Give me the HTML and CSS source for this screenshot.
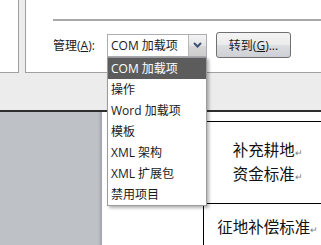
FILE: index.html
```html
<!DOCTYPE html>
<html lang="zh-CN">
  <head>
    <meta charset="UTF-8" />
    <title>加载项管理</title>
    <link rel="stylesheet" href="styles.css">
  </head>
  <body>
    <div class="window">
      <div class="panes">
        <div class="side-pane"></div>
        <div class="main-pane">
          <div class="separator"></div>
          <div class="manage-row">
            <span class="manage-label">管理(<u>A</u>):</span>
            <div class="combo">
              <span class="combo-value">COM 加载项</span>
              <span class="combo-arrow">
                <svg width="9" height="6" viewBox="0 0 9 6">
                  <polyline points="1,1 4.5,4.5 8,1" fill="none" stroke="#3d5175" stroke-width="2" />
                </svg>
              </span>
              <ul class="combo-list">
                <li class="selected">COM 加载项</li>
                <li>操作</li>
                <li>Word 加载项</li>
                <li>模板</li>
                <li>XML 架构</li>
                <li>XML 扩展包</li>
                <li>禁用项目</li>
              </ul>
            </div>
            <button class="go-btn">转到(<u>G</u>)...</button>
          </div>
        </div>
      </div>
    </div>

    <div class="workspace">
      <div class="gutter"></div>
      <div class="page">
        <table class="doc-table">
          <colgroup>
            <col class="col-blank" />
            <col class="col-text" />
          </colgroup>
          <tr class="row-tall">
            <td class="blank"></td>
            <td class="cell">补充耕地<span class="mark">↵</span><br />资金标准<span class="mark">↵</span></td>
          </tr>
          <tr>
            <td class="blank"></td>
            <td class="cell cell-low">征地补偿标准<span class="mark">↵</span></td>
          </tr>
        </table>
      </div>
    </div>
  </body>
</html>
```

FILE: styles.css
```css
body {
  margin: 0;
  width: 321px;
  height: 245px;
  overflow: hidden;
  font-family: "Open Sans", "Noto Sans CJK SC", sans-serif;
  font-size: 12px;
  color: #1a1a1a;
  background-color: #bec1c5;
}

.window {
  height: 110px;
  background-color: #ececec;
  border-bottom: 2px solid #2e2e2e;
}

.panes {
  display: flex;
  height: 73px;
}

.side-pane {
  width: 18px;
  background-color: #fff;
  border-right: 1px solid #a0a0a0;
  border-bottom: 1px solid #a0a0a0;
}

.main-pane {
  flex: 1;
  margin-left: 6px;
  background-color: #fff;
  border-left: 1px solid #a0a0a0;
  border-bottom: 1px solid #a0a0a0;
}

.separator {
  margin: 19px 0 0 27px;
  height: 2px;
  background-color: #a8a8a8;
}

.manage-row {
  display: flex;
  align-items: center;
  margin-top: 11px;
  padding-left: 27px;
  height: 26px;
}

.manage-label {
  width: 54px;
  white-space: nowrap;
}

.combo {
  position: relative;
  display: flex;
  box-sizing: border-box;
  width: 100px;
  height: 23px;
  border: 1px solid #abadb3;
  background-color: #fff;
}

.combo-value {
  flex: 1;
  padding-left: 3px;
  line-height: 21px;
  white-space: nowrap;
}

.combo-arrow {
  display: flex;
  align-items: center;
  justify-content: center;
  width: 17px;
  border-left: 1px solid #b8b8b8;
  background: linear-gradient(#f4f4f4, #e4e4e4 50%, #d6d6d6 51%, #cdcdcd);
}

.combo-list {
  position: absolute;
  z-index: 10;
  top: 22px;
  left: -1px;
  box-sizing: border-box;
  width: 100px;
  margin: 0;
  padding: 0;
  list-style: none;
  background-color: #fff;
  border: 1px solid #9c9c9c;
  box-shadow: 2px 2px 3px rgba(0, 0, 0, 0.3);
}

.combo-list li {
  height: 21px;
  line-height: 21px;
  padding-left: 3px;
  white-space: nowrap;
}

.combo-list li.selected {
  background-color: #5c5c5c;
  color: #fff;
}

.go-btn {
  margin-left: 9px;
  width: 75px;
  height: 26px;
  padding: 0;
  font-family: inherit;
  font-size: 12px;
  color: #1a1a1a;
  border: 1px solid #707070;
  border-radius: 3px;
  background: linear-gradient(#f4f4f4, #ebebeb 48%, #dcdde0 52%, #cdd0d5);
}

.workspace {
  display: flex;
  height: 133px;
}

.gutter {
  width: 102px;
  background: linear-gradient(to right, #bec1c5 96%, #9fa2a6);
}

.page {
  flex: 1;
  overflow: hidden;
  padding-top: 9px;
  background-color: #fff;
}

.doc-table {
  table-layout: fixed;
  width: 230px;
  border-collapse: collapse;
  font-family: "Noto Sans CJK SC", sans-serif;
  font-size: 15.5px;
  line-height: 21px;
  color: #111;
}

.col-blank {
  width: 101px;
}

.col-text {
  width: 129px;
}

.blank {
  padding: 0;
}

.cell {
  padding: 0;
  text-align: center;
  white-space: nowrap;
  border-top: 1px solid #000;
  border-left: 1px solid #000;
  border-bottom: 1px solid #000;
}

.row-tall {
  height: 82px;
}

.cell-low {
  vertical-align: top;
  padding-top: 12px;
  height: 40px;
}

.mark {
  font-size: 9px;
  color: #7a7a7a;
}
```
